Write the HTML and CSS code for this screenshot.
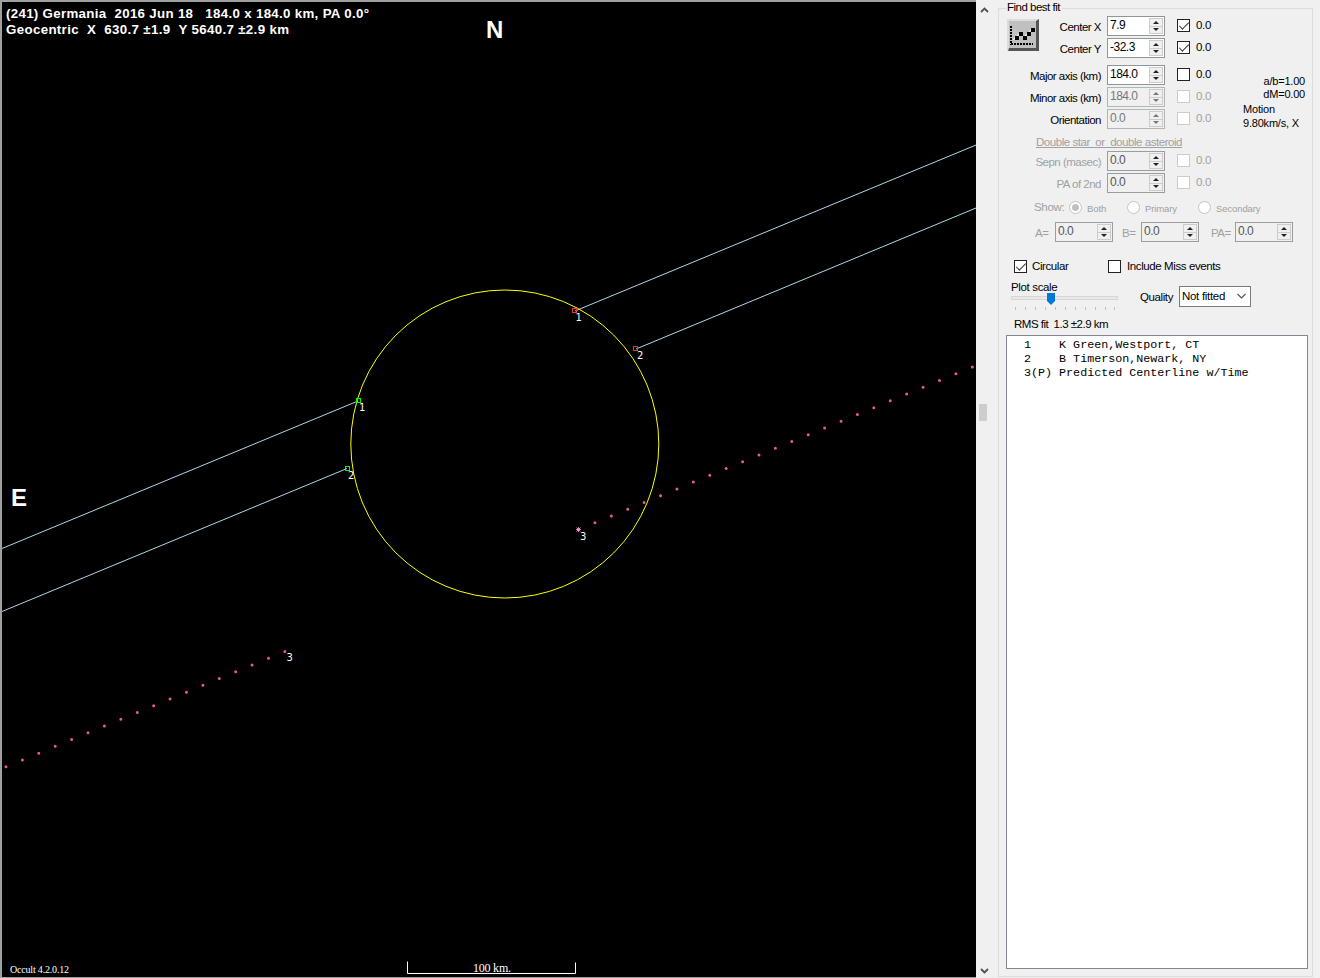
FILE: index.html
```html
<!DOCTYPE html>
<html lang="en">
<head>
    <meta charset="UTF-8">
    <title>Occult - Asteroid profile plot</title>
    <link rel="stylesheet" href="styles.css">
</head>
<body>
    <!-- Profile plot -->
    <svg class="plot" width="976" height="978" viewBox="0 0 976 978">
        <rect class="sky" x="2" y="2" width="974" height="975"/>

        <text class="title" x="6" y="17.5" textLength="363">(241) Germania  2016 Jun 18   184.0 x 184.0 km, PA 0.0°</text>
        <text class="title" x="6" y="33.5" textLength="283">Geocentric  X  630.7 ±1.9  Y 5640.7 ±2.9 km</text>
        <text class="compass" x="486" y="38">N</text>
        <text class="compass" x="11" y="506">E</text>

        <!-- Chords -->
        <path class="chord" d="M2 548.5L358 401M2 611.5L347 468.5M575 311L976 145M636 349L976 208"/>
        <circle class="body" cx="504.8" cy="444" r="154"/>

        <!-- Predicted centerline -->
        <path class="track" d="M6 766.7L286 651"/>
        <path class="track" d="M578.5 529.5L974 366.3"/>
        <path class="star" d="M578.5 527v5M576 529.5h5M576.5 527.5l4 4M580.5 527.5l-4 4"/>

        <g class="start">
            <rect x="356.5" y="398.5" width="4" height="4"/>
            <rect x="345.5" y="466.5" width="4" height="4"/>
        </g>
        <g class="end">
            <rect x="572.5" y="308.5" width="4" height="4"/>
            <rect x="633.5" y="346.5" width="4" height="4"/>
        </g>

        <g class="mark">
            <text x="359" y="411">1</text>
            <text x="348" y="479">2</text>
            <text x="575.5" y="321">1</text>
            <text x="637" y="359">2</text>
            <text x="580" y="540">3</text>
            <text x="286.5" y="661">3</text>
        </g>

        <text class="serif small" x="10" y="973" textLength="59">Occult 4.2.0.12</text>
        <text class="serif" x="473" y="972" textLength="38">100 km.</text>
        <path class="scale" d="M407.5 961.5v12h168v-11"/>
    </svg>

    <div class="scrollbar">
        <svg width="9" height="6" viewBox="0 0 9 6"><path d="M1 5l3.5-3.5L8 5"/></svg>
        <div class="scroll-thumb"></div>
        <svg width="9" height="6" viewBox="0 0 9 6"><path d="M1 1l3.5 3.5L8 1"/></svg>
    </div>

    <fieldset class="panel">
        <legend>Find best fit</legend>

        <div class="center-group">
            <div class="fit-btn">
                <svg width="32" height="32" viewBox="0 0 32 32">
                    <path class="btn-light" d="M0 0h32v32H0z"/>
                    <path class="btn-dark" d="M1 32h31V0l-3 2v27H2z"/>
                    <path class="btn-face" d="M2 2h27v27H2z"/>
                    <path class="btn-grid" d="M4 7v19M4 25h22"/>
                    <path class="btn-line" d="M6 21l3-3 4-4 4 4 4-4 5-5"/>
                    <path class="btn-ink" d="M8 17h4v4H8zM12 13h4v4h-4zM16 17h4v4h-4zM20 13h4v4h-4zM24 9h4v4h-4z"/>
                </svg>
            </div>
            <div class="rows">
                <div class="row">
                    <label>Center X</label><div class="spin">7.9<i></i></div><span class="check on"></span><span>0.0</span>
                </div>
                <div class="row">
                    <label>Center Y</label><div class="spin">-32.3<i></i></div><span class="check on"></span><span>0.0</span>
                </div>
            </div>
        </div>

        <div class="axis-group">
            <div class="rows">
                <div class="row">
                    <label>Major axis (km)</label><div class="spin">184.0<i></i></div><span class="check"></span><span>0.0</span>
                </div>
                <div class="row off-input">
                    <label>Minor axis (km)</label><div class="spin">184.0<i></i></div><span class="check"></span><span>0.0</span>
                </div>
                <div class="row off-input">
                    <label>Orientation</label><div class="spin">0.0<i></i></div><span class="check"></span><span>0.0</span>
                </div>
            </div>
            <div class="notes">
                <div class="ratio">a/b=1.00<br>dM=0.00</div>
                <div class="motion">Motion<br>9.80km/s, X</div>
            </div>
        </div>

        <div class="double disabled">
            <div class="double-title">Double star&nbsp; or&nbsp; double asteroid</div>
            <div class="rows">
                <div class="row">
                    <label>Sepn (masec)</label><div class="spin">0.0<i></i></div><span class="check"></span><span>0.0</span>
                </div>
                <div class="row">
                    <label>PA of 2nd</label><div class="spin">0.0<i></i></div><span class="check"></span><span>0.0</span>
                </div>
            </div>
            <div class="show">
                <span>Show:</span>
                <span class="radio on"></span><small>Both</small>
                <span class="radio"></span><small>Primary</small>
                <span class="radio"></span><small>Secondary</small>
            </div>
            <div class="offsets">
                <span>A=</span><div class="spin">0.0<i></i></div>
                <span>B=</span><div class="spin">0.0<i></i></div>
                <span>PA=</span><div class="spin">0.0<i></i></div>
            </div>
        </div>

        <div class="options">
            <span class="check on"></span><span>Circular</span>
            <span class="check"></span><span>Include Miss events</span>
        </div>

        <div class="display">
            <div class="slider">
                <div>Plot scale</div>
                <svg width="110" height="19" viewBox="0 0 110 19">
                    <rect class="groove" x=".5" y="3.5" width="106" height="3"/>
                    <path class="ticks" d="M4.5 14v3M14.5 14v3M24.5 14v3M34.5 14v3M44.5 14v3M54.5 14v3M64.5 14v3M74.5 14v3M84.5 14v3M94.5 14v3M103.5 14v3"/>
                    <path class="knob" d="M36 0h8v8l-4 4-4-4z"/>
                </svg>
            </div>
            <span class="quality">Quality</span>
            <div class="select">
                <span>Not fitted</span>
                <svg width="9" height="6" viewBox="0 0 9 6"><path d="M.5 1l4 4 4-4"/></svg>
            </div>
        </div>

        <div class="rms">RMS fit&nbsp; 1.3 ±2.9 km</div>
        <pre class="list">  1    K Green,Westport, CT
  2    B Timerson,Newark, NY
  3(P) Predicted Centerline w/Time</pre>
    </fieldset>
</body>
</html>
```

FILE: styles.css
```css
* {
    margin: 0;
    padding: 0;
    box-sizing: border-box;
}

body {
    width: 1320px;
    height: 978px;
    overflow: hidden;
    display: flex;
    background: #f0f0f0;
    color: #000;
    font: 11.5px/13px "Liberation Sans", Arial, sans-serif;
    letter-spacing: -0.5px;
    white-space: nowrap;
}

svg {
    display: block;
    flex: none;
}

/* Plot */
.plot { background: #a0a0a0; letter-spacing: 0; }
.plot text { fill: #fff; white-space: pre; }
.sky { fill: #000; }
.title { font-size: 13.3px; font-weight: bold; }
.compass { font-size: 24px; font-weight: bold; }
.mark { font-family: "DejaVu Sans", sans-serif; font-size: 10px; }
.serif { font-family: "Liberation Serif", serif; font-size: 12px; }
.small { font-size: 10px; }

.chord, .body, .star, .start, .end, .scale { fill: none; stroke-width: 1; }
.chord { stroke: #add8e6; }
.body { stroke: #ff0; }
.start { stroke: #0f0; }
.end { stroke: #e04030; }
.star { stroke: #ff9ad0; stroke-width: .8; }
.scale { stroke: #fff; }

.track {
    stroke: #e8589c;
    stroke-width: 3;
    stroke-linecap: round;
    stroke-dasharray: 0 17.75;
}

/* Scrollbar */
.scrollbar {
    width: 16px;
    padding: 7px 0 4px 4px;
    display: flex;
    flex-direction: column;
}

.scrollbar path, .select path {
    fill: none;
    stroke: #505050;
    stroke-width: 1.8;
}

.scroll-thumb {
    width: 8px;
    height: 17px;
    margin: 391px 0 auto -1px;
    background: #cdcdcd;
}

/* Panel */
.panel {
    width: 315px;
    height: 976px;
    margin: 1px 0 0 6px;
    padding: 0 4px 7px 7px;
    border: 1px solid #dcdcdc;
    display: flex;
    flex-direction: column;
}

.panel legend {
    height: 14px;
    padding: 0 2px 0 1px;
}

.center-group {
    display: flex;
    height: 42px;
    margin-top: 1px;
}

.fit-btn {
    width: 32px;
    padding: 3px 0 0 1px;
}

.center-group .rows { margin-left: -32px; }

.rows {
    display: flex;
    flex-direction: column;
    gap: 2px;
}

.row {
    display: grid;
    grid-template-columns: 95px 58px 13px 20px;
    column-gap: 6px;
    align-items: center;
    height: 20px;
}

.row label { text-align: right; padding-top: 2px; }
.row .check { margin: -1px 0 0 6px; }
.row > span:last-child { margin: -1px 0 0 6px; letter-spacing: -.3px; }

.spin {
    width: 58px;
    height: 20px;
    padding: 0 17px 1px 2px;
    position: relative;
    border: 1px solid #8f9698;
    background: #fff;
    font-size: 12px;
    line-height: 17px;
}

/* up and down buttons */
.spin i {
    position: absolute;
    top: 1px;
    right: 1px;
    width: 14px;
    height: 16px;
    border: 1px solid #ccc;
    background: linear-gradient(#ccc, #ccc) 0 7px / 100% 1px no-repeat #f0f0f0;
}

.spin i::before, .spin i::after {
    content: "";
    position: absolute;
    left: 3px;
    border: 3px solid transparent;
}

.spin i::before { top: -1px; border-bottom-color: #222; }
.spin i::after { bottom: -1px; border-top-color: #222; }

.check {
    width: 13px;
    height: 13px;
    border: 1px solid #222;
    background: #fff;
    flex: none;
}

.check.on::after {
    content: "";
    display: block;
    width: 9px;
    height: 4px;
    margin: 2px 0 0 1px;
    border: solid #333;
    border-width: 0 0 1.3px 1.3px;
    transform: rotate(-45deg) scaleX(.95);
}

.axis-group {
    display: flex;
    margin-top: 7px;
}

.notes {
    width: 62px;
    margin-left: 33px;
    padding-top: 10px;
    font-size: 11px;
    letter-spacing: -0.2px;
}

.ratio { text-align: right; }
.motion { line-height: 14px; margin-top: 1px; }

/* Disabled inputs */
.off-input .spin, .disabled .spin { border-color: #b0b5b8; background: #f0f0f0; color: #777; }
.off-input .check, .disabled .check { border-color: #ccc; }
.off-input > span:last-child { color: #a0a0a0; }
.off-input .spin i::before { border-bottom-color: #777; }
.off-input .spin i::after { border-top-color: #777; }
.disabled { color: #a0a0a0; }
.disabled .spin { border-color: #979da0; color: #555; }

.double-title {
    margin: 6px 0 2px 30px;
    text-decoration: underline;
    letter-spacing: -0.45px;
}

.show {
    display: flex;
    align-items: center;
    height: 15px;
    margin: 7px 0 0 28px;
}

.show > span:first-child { width: 35px; letter-spacing: -.3px; }
.show small { font-size: 9.5px; letter-spacing: -.1px; margin-left: 5px; width: 40px; padding-top: 1px; }
.show small:nth-of-type(2) { width: 53px; }

.radio {
    width: 13px;
    height: 13px;
    border: 1px solid #c4c4c4;
    border-radius: 50%;
    background: #fff;
}

.radio.on { background: radial-gradient(circle, #c0c0c0 3px, #fff 4px); }

.offsets {
    display: flex;
    align-items: center;
    margin: 7px 0 0 29px;
}

.offsets span { width: 20px; padding-top: 2px; }
.offsets .spin { margin-right: 9px; }
.offsets span:nth-of-type(2) { width: 19px; }
.offsets span:nth-of-type(3) { width: 24px; margin-left: 3px; }

.options {
    display: flex;
    align-items: center;
    gap: 6px;
    margin: 18px 0 0 8px;
    letter-spacing: -.4px;
}

.options span:nth-child(2) { width: 69px; margin-left: -1px; margin-right: 1px; }

.display {
    display: flex;
    margin: 8px 0 0 5px;
}

.slider { width: 129px; letter-spacing: -.35px; }
.slider svg { margin-top: -1px; }
.groove { fill: #e7eaea; stroke: #d6d6d6; }
.ticks { stroke: #c0c0c0; }
.knob { fill: #0078d7; }
.quality { width: 39px; padding-top: 10px; letter-spacing: -.4px; }

.select {
    width: 72px;
    height: 21px;
    margin-top: 5px;
    padding: 0 4px 1px 2px;
    border: 1px solid #7a7a7a;
    background: #fff;
    display: flex;
    align-items: center;
    justify-content: space-between;
    letter-spacing: -.3px;
}

.select path { stroke-width: 1.1; }

.rms { margin: 6px 0 4px 8px; letter-spacing: -.5px; }

.list {
    flex: 1;
    width: 302px;
    padding: 2px 3px;
    border: 1px solid #828790;
    background: #fff;
    font: 11.7px/14px "Liberation Mono", "Courier New", monospace;
    letter-spacing: 0;
}

/* Button icon */
.btn-light { fill: #dcdcdc; }
.btn-dark { fill: #555; }
.btn-face { fill: #c0c0c0; }
.btn-grid { fill: none; stroke: #000; stroke-width: 2; stroke-dasharray: 2 1; }
.btn-line { fill: none; stroke: #fff; }
.btn-ink { fill: #000; }
```
